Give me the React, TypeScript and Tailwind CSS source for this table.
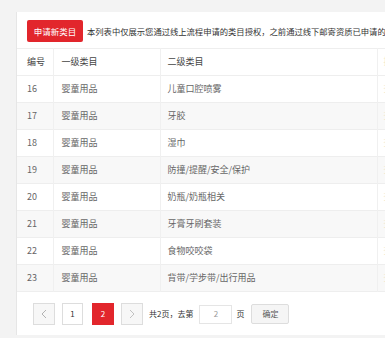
const rows = [
  ["16", "婴童用品", "儿童口腔喷雾"],
  ["17", "婴童用品", "牙胶"],
  ["18", "婴童用品", "湿巾"],
  ["19", "婴童用品", "防撞/提醒/安全/保护"],
  ["20", "婴童用品", "奶瓶/奶瓶相关"],
  ["21", "婴童用品", "牙膏牙刷套装"],
  ["22", "婴童用品", "食物咬咬袋"],
  ["23", "婴童用品", "背带/学步带/出行用品"],
];

export default function App() {
  return (
    <div
      className="w-[385px] h-[338px] overflow-hidden bg-[#f3f3f3] pt-[12px] pl-[16px]"
      style={{ fontFamily: '"Noto Sans CJK SC", "Liberation Sans", sans-serif' }}
    >
      <div className="w-[480px] h-[323px] bg-white border-l border-[#e6e6e6] pt-[8px]">
        <div className="flex items-center pl-[10px] h-[22px]">
          <div className="w-[56px] h-[22px] bg-[#e2262c] rounded-[2px] text-white text-[8.5px] flex items-center justify-center">
            申请新类目
          </div>
          <span className="ml-[4px] text-[8.3px] text-[#333] whitespace-nowrap">
            本列表中仅展示您通过线上流程申请的类目授权，之前通过线下邮寄资质已申请的类目
          </span>
        </div>

        <table className="mt-[6px] border-collapse text-[9px] text-[#666]">
          <thead>
            <tr className="h-[27px] border-y border-[#eeeeee] text-[#444]">
              <th className="w-[36px] pl-[10px] text-left font-normal border-r border-[#f0f0f0]">编号</th>
              <th className="w-[107px] pl-[8px] text-left font-normal border-r border-[#f0f0f0]">一级类目</th>
              <th className="w-[217px] pl-[7px] text-left font-normal border-r border-[#f0f0f0]">二级类目</th>
              <th className="w-[100px] pl-[6px] text-left font-normal text-[#f0e6c8]">操作</th>
            </tr>
          </thead>
          <tbody>
            {rows.map((r, i) => (
              <tr
                key={r[0]}
                className={
                  i % 2 === 1
                    ? "h-[27px] border-b border-[#eeeeee] bg-[#f8f8f8]"
                    : "h-[27px] border-b border-[#eeeeee] bg-white"
                }
              >
                <td className="pl-[10px] border-r border-[#f0f0f0]">{r[0]}</td>
                <td className="pl-[8px] border-r border-[#f0f0f0]">{r[1]}</td>
                <td className="pl-[7px] border-r border-[#f0f0f0]">{r[2]}</td>
                <td className="pl-[6px] text-[#f0e6c8]">查看</td>
              </tr>
            ))}
          </tbody>
        </table>

        <div className="flex items-center mt-[11px] pl-[16px] text-[8px] text-[#333]">
          <div className="w-[22px] h-[22px] border border-[#dddddd] bg-[#f7f7f7] flex items-center justify-center">
            <svg width="6" height="10" viewBox="0 0 6 10">
              <path d="M5 1 L1 5 L5 9" fill="none" stroke="#aaa" strokeWidth="0.9" />
            </svg>
          </div>
          <div className="ml-[7px] w-[21px] h-[22px] border border-[#dddddd] bg-white flex items-center justify-center">1</div>
          <div className="ml-[9px] w-[22px] h-[22px] bg-[#e2262c] text-white flex items-center justify-center">2</div>
          <div className="ml-[7px] w-[22px] h-[22px] border border-[#dddddd] bg-[#f7f7f7] flex items-center justify-center">
            <svg width="6" height="10" viewBox="0 0 6 10">
              <path d="M1 1 L5 5 L1 9" fill="none" stroke="#bbb" strokeWidth="0.9" />
            </svg>
          </div>
          <span className="ml-[6px]">共2页，去第</span>
          <div className="ml-[6px] w-[33px] h-[19px] border border-[#e5e5e5] bg-white flex items-center justify-center text-[#999]">2</div>
          <span className="ml-[4px]">页</span>
          <div className="ml-[7px] w-[38px] h-[20px] border border-[#dddddd] bg-[#f5f5f5] rounded-[2px] flex items-center justify-center text-[#555]">
            确定
          </div>
        </div>
      </div>
    </div>
  );
}
